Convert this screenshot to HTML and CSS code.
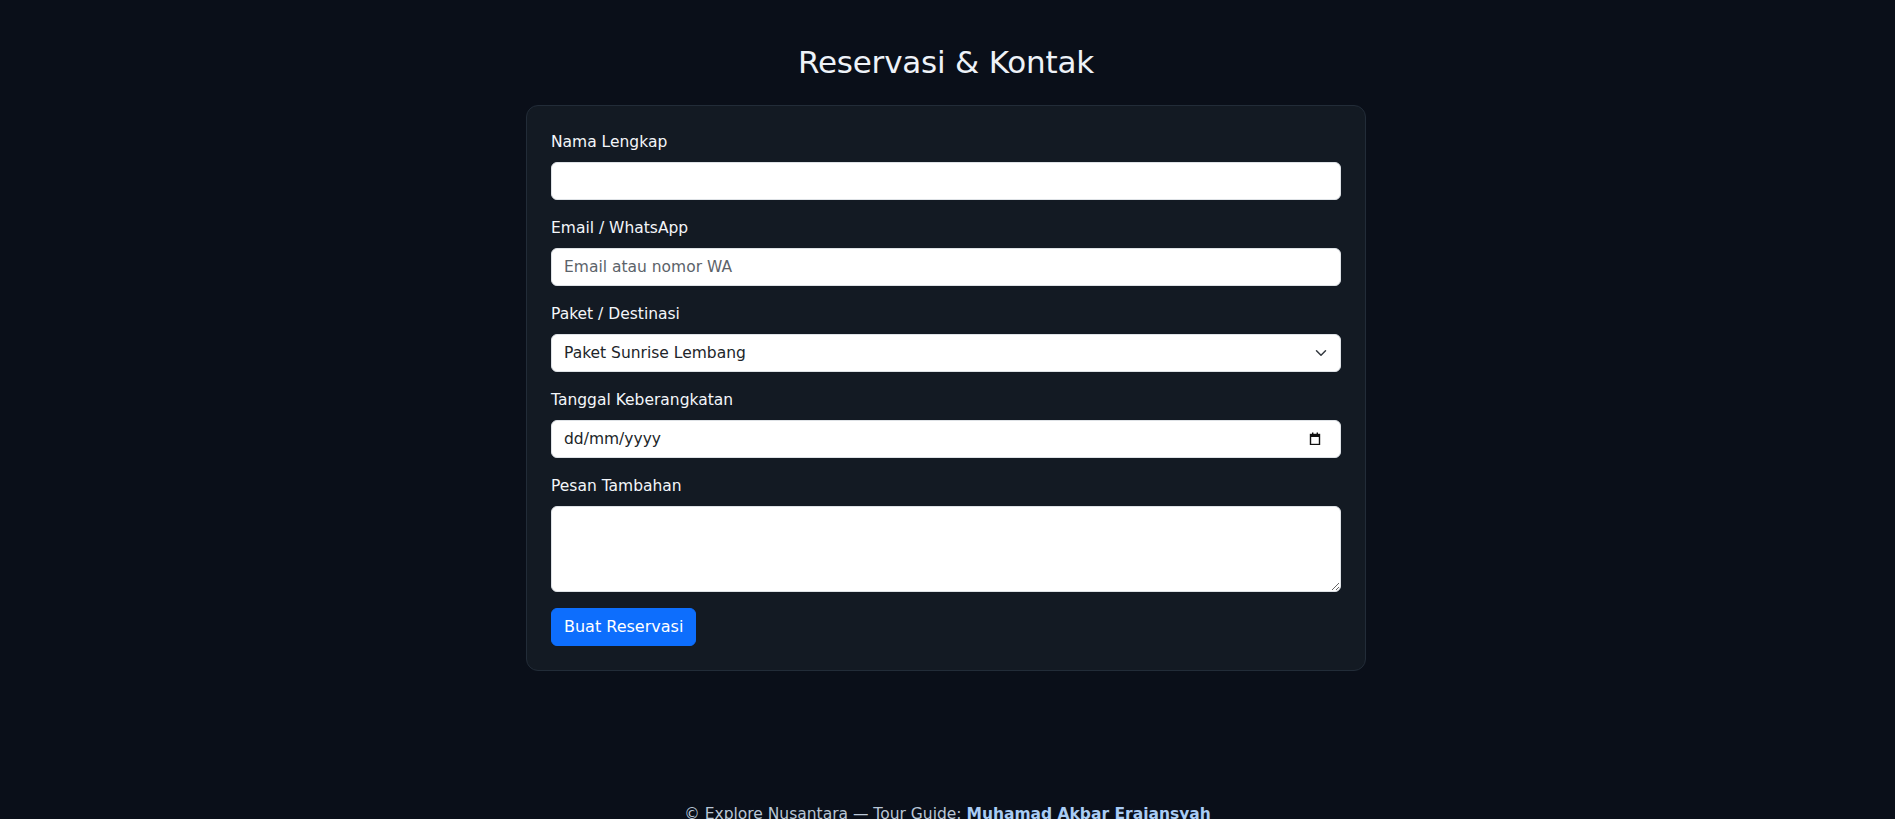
FILE: index.html
```html
<!DOCTYPE html>
<html lang="id">
<head>
<meta charset="utf-8">
<title>Reservasi &amp; Kontak</title>
<link rel="stylesheet" href="styles.css">
</head>
<body>
<section class="reservasi">
  <h2 class="judul">Reservasi &amp; Kontak</h2>
  <form class="kartu">
    <div class="grup">
      <label class="label" for="nama">Nama Lengkap</label>
      <input class="kontrol" id="nama" type="text">
    </div>
    <div class="grup">
      <label class="label" for="kontak">Email / WhatsApp</label>
      <input class="kontrol" id="kontak" type="text" placeholder="Email atau nomor WA">
    </div>
    <div class="grup">
      <label class="label" for="paket">Paket / Destinasi</label>
      <div class="bungkus">
        <select class="kontrol pilih" id="paket">
          <option>Paket Sunrise Lembang</option>
        </select>
        <svg class="ikon-chevron" width="16" height="12" viewBox="0 0 16 16" aria-hidden="true"><path fill="none" stroke="#343a40" stroke-linecap="round" stroke-linejoin="round" stroke-width="2" d="m2 5 6 6 6-6"/></svg>
      </div>
    </div>
    <div class="grup">
      <label class="label" for="tanggal">Tanggal Keberangkatan</label>
      <div class="bungkus">
        <input class="kontrol tanggal" id="tanggal" type="text" placeholder="dd/mm/yyyy">
        <svg class="ikon-kalender" width="12" height="13" viewBox="0 0 12 13" aria-hidden="true">
          <rect x="1.5" y="2.5" width="9" height="10" fill="none" stroke="#111" stroke-width="1.4"/>
          <rect x="1" y="2" width="10" height="3" fill="#111"/>
          <rect x="3" y="0.5" width="1.4" height="2" fill="#111"/>
          <rect x="7.6" y="0.5" width="1.4" height="2" fill="#111"/>
        </svg>
      </div>
    </div>
    <div class="grup">
      <label class="label" for="pesan">Pesan Tambahan</label>
      <textarea class="kontrol area" id="pesan" rows="3"></textarea>
    </div>
    <button class="tombol" type="button">Buat Reservasi</button>
  </form>
</section>
<footer class="kaki">
  <p>© Explore Nusantara — Tour Guide: <strong class="nama">Muhamad Akbar Erajansyah</strong></p>
</footer>
</body>
</html>
```
FILE: styles.css
```css
* { box-sizing: border-box; }

html, body {
  margin: 0;
  background: #0a0f19;
  color: #e8edf5;
  font-family: "DejaVu Sans", "Noto Sans", sans-serif;
  font-size: 16px;
  line-height: 1.5;
}

body { height: 819px; overflow: hidden; }

.reservasi {
  padding: 43px 3px 48px 0;
  display: flex;
  flex-direction: column;
  align-items: center;
}

.judul {
  margin: 0 0 24px;
  font-size: 31px;
  font-weight: 400;
  line-height: 38px;
  color: #eef2f8;
  letter-spacing: -0.2px;
}

.kartu {
  width: 840px;
  margin: 0;
  padding: 24px;
  background: #131a23;
  border: 1px solid #222c38;
  border-radius: 12px;
  display: flex;
  flex-direction: column;
  align-items: flex-start;
}

.grup {
  width: 100%;
  margin-bottom: 16px;
  display: flex;
  flex-direction: column;
}

.label {
  margin-bottom: 8px;
  font-size: 15.5px;
  line-height: 24px;
  color: #f3f6fa;
}

.bungkus { position: relative; width: 100%; }

.kontrol {
  display: block;
  width: 100%;
  height: 38px;
  padding: 6px 12px;
  font-family: inherit;
  font-size: 15.5px;
  line-height: 24px;
  color: #212529;
  background: #fff;
  border: 1px solid #dee2e6;
  border-radius: 6px;
  outline: none;
}

.kontrol::placeholder { color: #5c636a; }

.pilih {
  appearance: none;
  -webkit-appearance: none;
  padding-right: 36px;
}

.tanggal::placeholder { color: #212529; }

.ikon-chevron {
  position: absolute;
  right: 12px;
  top: 13px;
  pointer-events: none;
}

.ikon-kalender {
  position: absolute;
  right: 20px;
  top: 12px;
  pointer-events: none;
}

.area {
  height: 86px;
  resize: vertical;
}

.tombol {
  height: 38px;
  padding: 6px 12px;
  font-family: inherit;
  font-size: 16px;
  line-height: 24px;
  color: #fff;
  background: #0d6efd;
  border: 1px solid #0d6efd;
  border-radius: 6px;
}

.kaki {
  padding-top: 83px;
  text-align: center;
}

.kaki p {
  margin: 0;
  font-size: 15.5px;
  line-height: 24px;
  color: #b9c6d6;
}

.nama {
  font-weight: 700;
  color: #a9ccf5;
}
```
